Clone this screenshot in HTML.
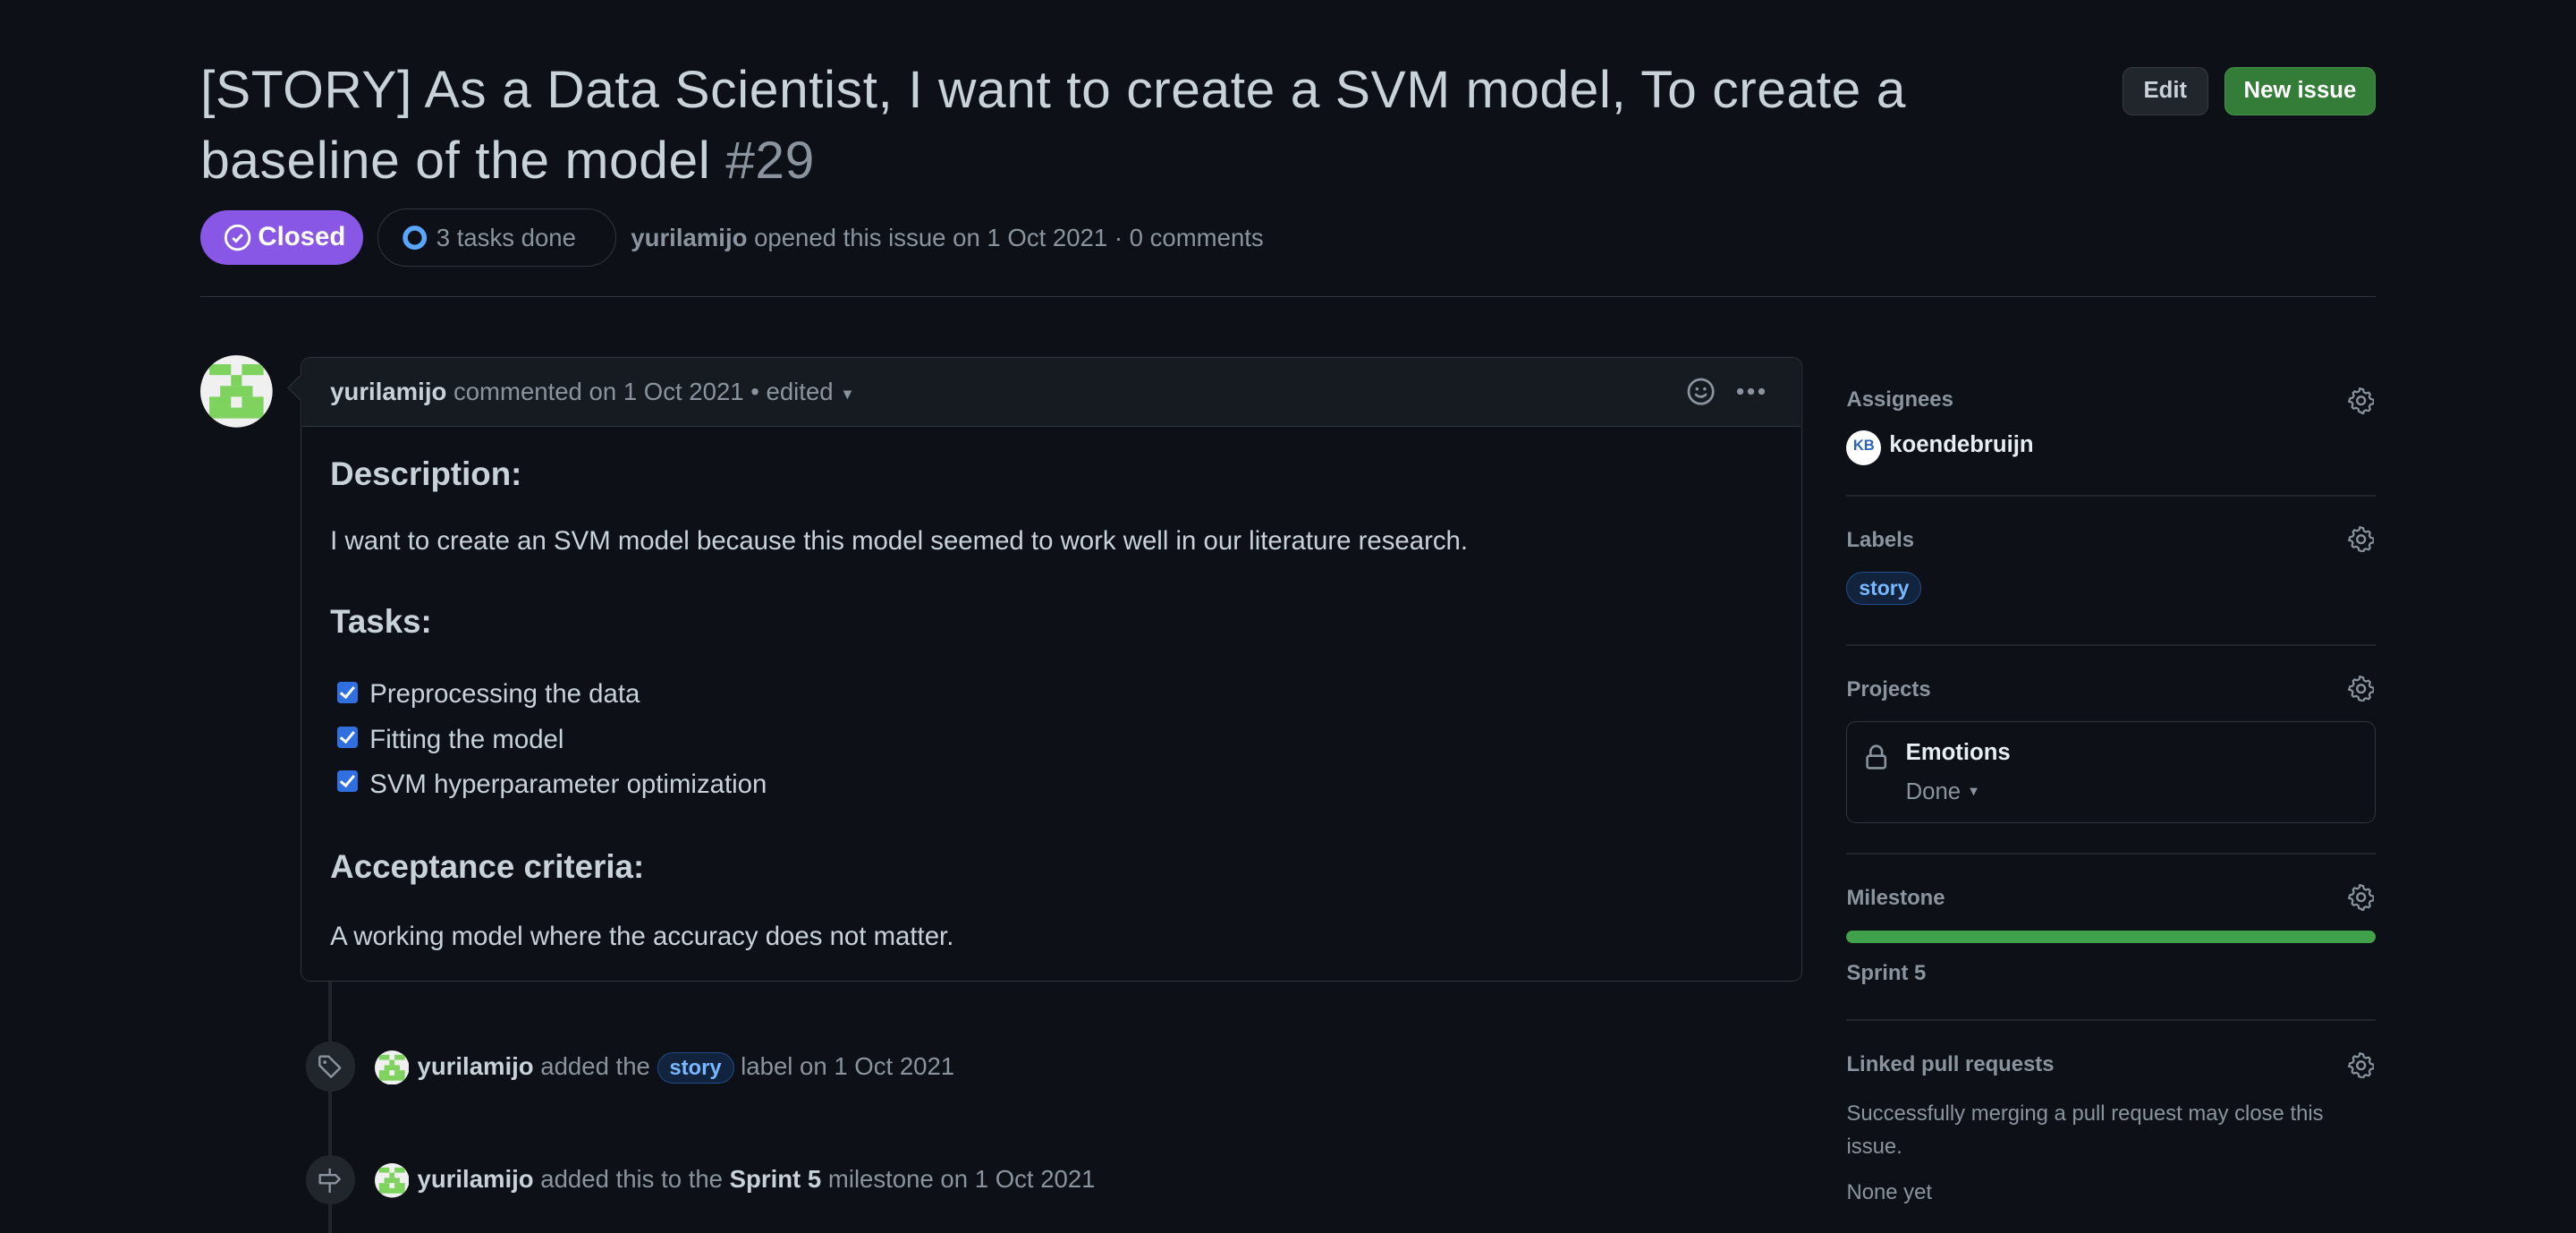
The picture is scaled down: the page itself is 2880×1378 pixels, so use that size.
<!DOCTYPE html>
<html><head><meta charset="utf-8"><style>
html,body{margin:0;padding:0;background:#0d1117;overflow:hidden}
#root{position:relative;width:1568px;height:750px;zoom:1.83673;font-family:"Liberation Sans",Arial,sans-serif;color:#c9d1d9;font-size:14px}
.a{position:absolute;white-space:nowrap}
.m{color:#8b949e}
.b{font-weight:bold}
.hd{font-size:13px;font-weight:bold;color:#8b949e}
.hr{position:absolute;height:1px;background:#21262d}
.gear{position:absolute;width:16px;height:16px}
.cb{position:absolute;width:13px;height:13px;background:#2f6fe0;border-radius:2px;left:205px}
.cb:after{content:"";position:absolute;left:4px;top:1px;width:3px;height:7px;border:solid #fff;border-width:0 2px 2px 0;transform:rotate(40deg)}
.pill{display:inline-block;border:1px solid #1f4d8a;background:#12233d;color:#79b8ff;border-radius:12px;font-weight:bold;font-size:12px;padding:0 7px;line-height:18px}
</style></head><body><div id="root">
<svg width="0" height="0" style="position:absolute"><defs>
<clipPath id="c"><circle cx="2.5" cy="2.5" r="3.33"/></clipPath>
<g id="av"><g clip-path="url(#c)"><rect x="-1" y="-1" width="7" height="7" fill="#f0f0f0"/>
<rect x="0" y="0" width="2" height="1" fill="#7ed35f"/><rect x="3" y="0" width="2" height="1" fill="#7ed35f"/>
<rect x="2" y="1" width="1" height="1" fill="#7ed35f"/>
<rect x="1" y="2" width="3" height="1" fill="#7ed35f"/>
<rect x="0" y="3" width="2" height="1" fill="#7ed35f"/><rect x="3" y="3" width="2" height="1" fill="#7ed35f"/>
<rect x="0" y="4" width="5" height="1" fill="#7ed35f"/></g></g>
<g id="g"><path d="M8 0.9l1.3 0.3.4 1.7 1.2.7 1.7-.5.9 1-.5 1.7.7 1.2 1.7.4.3 1.3-.3 1.3-1.7.4-.7 1.2.5 1.7-.9 1-1.7-.5-1.2.7-.4 1.7L8 15.1l-1.3-.3-.4-1.7-1.2-.7-1.7.5-.9-1 .5-1.7-.7-1.2-1.7-.4L.9 8l.3-1.3 1.7-.4.7-1.2-.5-1.7.9-1 1.7.5 1.2-.7.4-1.7z" fill="none" stroke="#8b949e" stroke-width="1.2" stroke-linejoin="round"/><circle cx="8" cy="8" r="2.4" fill="none" stroke="#8b949e" stroke-width="1.3"/></g>
</defs></svg>
<div class="a" style="left:122px;top:33px;font-size:32px;line-height:44px;letter-spacing:0.3px">[STORY] As a Data Scientist, I want to create a SVM model, To create a</div>
<div class="a" style="left:122px;top:76px;font-size:32px;line-height:44px;letter-spacing:0.3px">baseline of the model <span class="m">#29</span></div>
<div class="a" style="left:1292px;top:41px;width:52px;height:29px;border:1px solid #363b42;background:#21262d;border-radius:6px;font-size:14px;font-weight:bold;line-height:28px;text-align:center;box-sizing:border-box">Edit</div>
<div class="a" style="left:1354px;top:41px;width:92px;height:29px;border:1px solid #46954a;background:#347d39;border-radius:6px;color:#fff;font-size:14px;font-weight:bold;line-height:28px;text-align:center;box-sizing:border-box">New issue</div>
<div class="a" style="left:122px;top:128px;width:99px;height:33px;background:#8957e5;border-radius:17px;color:#fff;font-size:16px;font-weight:bold;line-height:33px"><svg style="position:absolute;left:14px;top:8px" width="17" height="17" viewBox="0 0 16 16"><circle cx="8" cy="8" r="6.8" fill="none" stroke="#fff" stroke-width="1.5"/><path d="M5.3 8.2l1.8 1.8 3.6-3.8" fill="none" stroke="#fff" stroke-width="1.5"/></svg><span style="position:absolute;left:35px">Closed</span></div>
<div class="a" style="left:230px;top:127px;width:145px;height:35px;border:1px solid #30363d;border-radius:18px;box-sizing:border-box;font-size:15px;color:#8b949e;line-height:35px"><svg style="position:absolute;left:14px;top:9px" width="16" height="16"><circle cx="8" cy="8" r="5.8" fill="none" stroke="#58a6ff" stroke-width="3"/></svg><span style="position:absolute;left:35px">3 tasks done</span></div>
<div class="a m" style="left:384px;top:136px;font-size:15px"><span class="b" style="color:#8b949e">yurilamijo</span> opened this issue on 1 Oct 2021 · 0 comments</div>
<div class="hr" style="left:122px;top:180px;width:1324px;background:#30363d"></div>

<svg class="a" style="left:122px;top:216px" width="44" height="44" viewBox="-0.83 -0.83 6.67 6.67"><use href="#av"/></svg>
<div class="a" style="left:183px;top:217px;width:914px;height:380px;border:1px solid #30363d;border-radius:6px;box-sizing:border-box"></div>
<div class="a" style="left:184px;top:218px;width:912px;height:41px;background:#161b22;border-bottom:1px solid #30363d;border-radius:5px 5px 0 0"></div>
<div class="a" style="left:177px;top:231px;width:10px;height:10px;background:#161b22;border-left:1px solid #30363d;border-bottom:1px solid #30363d;transform:rotate(45deg)"></div>
<div class="a" style="left:201px;top:230px;font-size:15px"><span class="b">yurilamijo</span> <span class="m">commented on 1 Oct 2021 • edited</span> <span class="m" style="font-size:9px;position:relative;top:-1px">▼</span></div>
<svg class="a" style="left:1027px;top:230px" width="17" height="17" viewBox="0 0 16 16"><circle cx="8" cy="8" r="7" fill="none" stroke="#8b949e" stroke-width="1.4"/><circle cx="5.8" cy="6.5" r=".9" fill="#8b949e"/><circle cx="10.2" cy="6.5" r=".9" fill="#8b949e"/><path d="M5.2 9.8q2.8 2.4 5.6 0" fill="none" stroke="#8b949e" stroke-width="1.4" stroke-linecap="round"/></svg>
<svg class="a" style="left:1057px;top:235px" width="18" height="6"><circle cx="2.5" cy="3" r="2" fill="#8b949e"/><circle cx="9" cy="3" r="2" fill="#8b949e"/><circle cx="15.5" cy="3" r="2" fill="#8b949e"/></svg>

<div class="a b" style="left:201px;top:277px;font-size:20px">Description:</div>
<div class="a" style="left:201px;top:320px;font-size:16px">I want to create an SVM model because this model seemed to work well in our literature research.</div>
<div class="a b" style="left:201px;top:367px;font-size:20px">Tasks:</div>
<div class="cb" style="top:415px"></div><div class="a" style="left:225px;top:413px;font-size:16px">Preprocessing the data</div>
<div class="cb" style="top:442px"></div><div class="a" style="left:225px;top:441px;font-size:16px">Fitting the model</div>
<div class="cb" style="top:469px"></div><div class="a" style="left:225px;top:468px;font-size:16px">SVM hyperparameter optimization</div>
<div class="a b" style="left:201px;top:516px;font-size:20px">Acceptance criteria:</div>
<div class="a" style="left:201px;top:561px;font-size:16px">A working model where the accuracy does not matter.</div>

<div class="a" style="left:200px;top:597px;width:2px;height:153px;background:#21262d"></div>
<div class="a" style="left:186px;top:634px;width:30px;height:30px;border-radius:15px;background:#21262d"></div>
<svg class="a" style="left:193px;top:641px" width="16" height="16" viewBox="0 0 16 16"><path d="M1.8 2.5v5l7 7 5.5-5.5-7-7h-5z" fill="none" stroke="#8b949e" stroke-width="1.3" stroke-linejoin="round"/><circle cx="5" cy="5.5" r="1" fill="#8b949e"/></svg>
<div class="a" style="left:186px;top:703px;width:30px;height:30px;border-radius:15px;background:#21262d"></div>
<svg class="a" style="left:193px;top:710px" width="16" height="16" viewBox="0 0 16 16"><path d="M2 5h9.5l2.5 2.5-2.5 2.5H2z" fill="none" stroke="#8b949e" stroke-width="1.3" stroke-linejoin="round"/><path d="M8 1v4M8 10v6" stroke="#8b949e" stroke-width="1.3"/></svg>
<svg class="a" style="left:228px;top:639px" width="21" height="21" viewBox="-0.83 -0.83 6.67 6.67"><use href="#av"/></svg>
<svg class="a" style="left:228px;top:708px" width="21" height="21" viewBox="-0.83 -0.83 6.67 6.67"><use href="#av"/></svg>
<div class="a m" style="left:254px;top:640px;font-size:15px"><span class="b" style="color:#c9d1d9">yurilamijo</span> added the <span class="pill" style="font-size:13px">story</span> label on 1 Oct 2021</div>
<div class="a m" style="left:254px;top:709px;font-size:15px"><span class="b" style="color:#c9d1d9">yurilamijo</span> added this to the <span class="b" style="color:#c9d1d9">Sprint 5</span> milestone on 1 Oct 2021</div>

<div class="a hd" style="left:1124px;top:236px">Assignees</div>
<svg class="gear" style="left:1429px;top:236px" viewBox="0 0 16 16"><use href="#g"/></svg>
<div class="a" style="left:1124px;top:262px;width:21px;height:21px;border-radius:11px;background:#fff;color:#2a63b8;font-size:9px;font-weight:bold;text-align:center;line-height:19px">KB</div>
<div class="a b" style="left:1150px;top:263px;font-size:14px;color:#e6edf3">koendebruijn</div>
<div class="hr" style="left:1124px;top:301px;width:322px"></div>
<div class="a hd" style="left:1124px;top:321px">Labels</div>
<svg class="gear" style="left:1429px;top:320px" viewBox="0 0 16 16"><use href="#g"/></svg>
<div class="a" style="left:1124px;top:348px"><span class="pill" style="font-size:12.5px;line-height:19px">story</span></div>
<div class="hr" style="left:1124px;top:392px;width:322px"></div>
<div class="a hd" style="left:1124px;top:412px">Projects</div>
<svg class="gear" style="left:1429px;top:411px" viewBox="0 0 16 16"><use href="#g"/></svg>
<div class="a" style="left:1124px;top:439px;width:322px;height:62px;border:1px solid #30363d;border-radius:6px;box-sizing:border-box"></div>
<svg class="a" style="left:1134px;top:452px" width="16" height="17" viewBox="0 0 16 17"><path d="M4.5 8V5.5a3.5 3.5 0 017 0V8" fill="none" stroke="#8b949e" stroke-width="1.4"/><rect x="2.5" y="8" width="11" height="7.5" rx="1.3" fill="none" stroke="#8b949e" stroke-width="1.4"/></svg>
<div class="a b" style="left:1160px;top:450px;font-size:14px;color:#e6edf3">Emotions</div>
<div class="a m" style="left:1160px;top:474px;font-size:14px">Done <span style="font-size:8px;position:relative;top:-2px">▼</span></div>
<div class="hr" style="left:1124px;top:519px;width:322px"></div>
<div class="a hd" style="left:1124px;top:539px">Milestone</div>
<svg class="gear" style="left:1429px;top:538px" viewBox="0 0 16 16"><use href="#g"/></svg>
<div class="a" style="left:1124px;top:566px;width:322px;height:8px;border-radius:4px;background:#3fa14a"></div>
<div class="a b" style="left:1124px;top:585px;font-size:13px;color:#8b949e">Sprint 5</div>
<div class="hr" style="left:1124px;top:620px;width:322px"></div>
<div class="a hd" style="left:1124px;top:640px">Linked pull requests</div>
<svg class="gear" style="left:1429px;top:640px" viewBox="0 0 16 16"><use href="#g"/></svg>
<div class="a m" style="left:1124px;top:668px;font-size:13px;line-height:20px;white-space:normal;width:322px">Successfully merging a pull request may close this issue.</div>
<div class="a m" style="left:1124px;top:718px;font-size:13px">None yet</div>
</div></body></html>
